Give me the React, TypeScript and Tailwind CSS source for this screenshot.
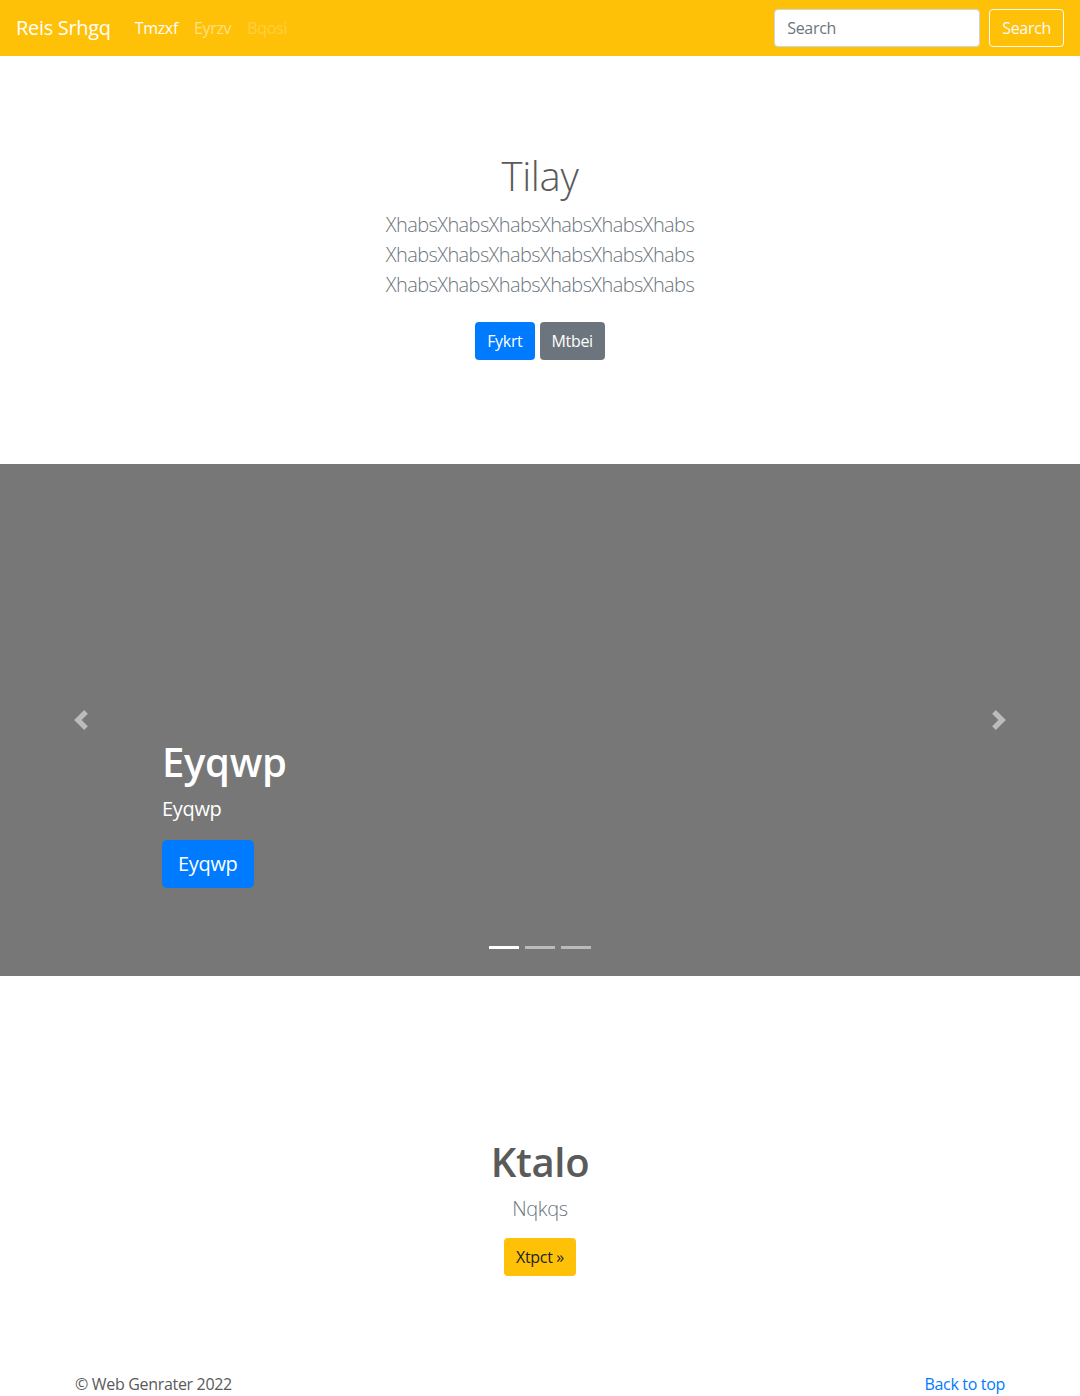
import React from 'react';

const font = { fontFamily: '"Open Sans", "Noto Sans", sans-serif' };

function Chevron({ dir }: { dir: 'left' | 'right' }) {
  // bootstrap 4 carousel control glyph
  const d =
    dir === 'left'
      ? 'M5.25 0l-4 4 4 4 1.5-1.5-2.5-2.5 2.5-2.5-1.5-1.5z'
      : 'M2.75 0l-1.5 1.5 2.5 2.5-2.5 2.5 1.5 1.5 4-4-4-4z';
  return (
    <svg width="20" height="20" viewBox="0 0 8 8" className="opacity-50">
      <path d={d} fill="#fff" />
    </svg>
  );
}

export default function App() {
  const lines = ['XhabsXhabsXhabsXhabsXhabsXhabs', 'XhabsXhabsXhabsXhabsXhabsXhabs', 'XhabsXhabsXhabsXhabsXhabsXhabs'];

  return (
    <div className="min-h-[1396px] bg-white text-[#5a5a5a] text-base leading-6 tracking-[-0.02em]" style={font}>
      {/* Navbar */}
      <nav className="h-14 bg-[#ffc107] px-4 flex items-center justify-between">
        <div className="flex items-center">
          <a className="text-xl leading-[30px] text-white mr-4">Reis Srhgq</a>
          <div className="flex items-center">
            <a className="px-2 text-base text-white">Tmzxf</a>
            <a className="px-2 text-base text-white/50">Eyrzv</a>
            <a className="px-2 text-base text-white/25">Bqosi</a>
          </div>
        </div>
        <div className="flex items-center gap-[9px]">
          <input
            placeholder="Search"
            className="w-[206px] h-[38px] px-3 text-base bg-white border border-[#ced4da] rounded text-[#495057] placeholder:text-[#6c757d] outline-none tracking-[-0.02em]"
          />
          <button className="h-[38px] px-3 text-base text-[#f8f9fa] border border-[#f8f9fa] rounded">
            Search
          </button>
        </div>
      </nav>

      {/* Jumbotron */}
      <section className="pt-24 pb-24 text-center">
        <h1 className="text-[40px] leading-[48px] font-light mb-[10px]">Tilay</h1>
        <p className="text-xl leading-[30px] font-light text-[#6c757d] mb-[14px] tracking-[-0.03em]">
          {lines.map((l, i) => (
            <span key={i} className="block">
              {l}
            </span>
          ))}
        </p>
        <div className="flex justify-center gap-[5px] py-2">
          <button className="h-[38px] px-3 text-base text-white bg-[#007bff] rounded">Fykrt</button>
          <button className="h-[38px] px-3 text-base text-white bg-[#6c757d] rounded">Mtbei</button>
        </div>
      </section>

      {/* Carousel */}
      <div className="relative h-[512px] bg-[#777777] flex">
        <div className="w-[15%] flex items-center justify-center">
          <Chevron dir="left" />
        </div>
        <div className="flex-1 flex flex-col justify-end pb-[88px] text-white">
          <h1 className="text-[40px] leading-[48px] font-semibold mb-2">Eyqwp</h1>
          <p className="text-xl leading-[30px] mb-4">Eyqwp</p>
          <div>
            <button className="h-12 px-4 text-xl text-white bg-[#007bff] rounded-[5px]">Eyqwp</button>
          </div>
        </div>
        <div className="w-[15%] flex items-center justify-center">
          <Chevron dir="right" />
        </div>
        <div className="absolute left-0 right-0 bottom-[27px] flex justify-center gap-[6px]">
          <span className="w-[30px] h-[3px] bg-white" />
          <span className="w-[30px] h-[3px] bg-white/50" />
          <span className="w-[30px] h-[3px] bg-white/50" />
        </div>
      </div>

      {/* Marketing */}
      <section className="pt-[162px] pb-[96px] text-center">
        <h2 className="text-[40px] leading-[48px] font-semibold mb-2">Ktalo</h2>
        <p className="text-xl leading-[30px] font-light text-[#6c757d] mb-[14px]">Nqkqs</p>
        <button className="h-[38px] px-3 text-base text-[#212529] bg-[#ffc107] rounded">Xtpct »</button>
      </section>

      {/* Footer */}
      <footer className="w-[960px] mx-auto px-[15px] flex justify-between">
        <p>© Web Genrater 2022</p>
        <a className="text-[#007bff]">Back to top</a>
      </footer>
    </div>
  );
}
